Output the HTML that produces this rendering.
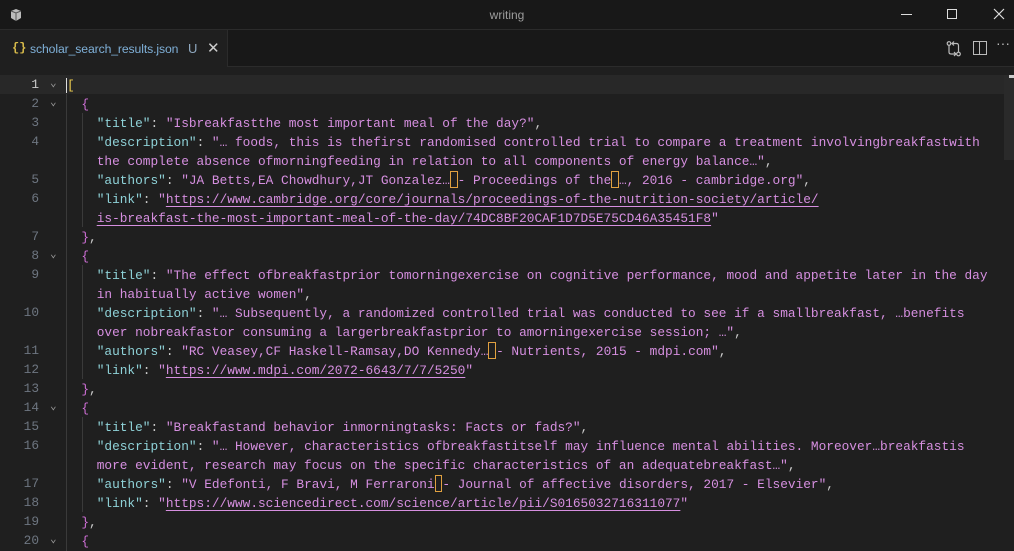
<!DOCTYPE html>
<html><head><meta charset="utf-8"><style>
*{margin:0;padding:0;box-sizing:border-box}
body{width:1014px;height:551px;overflow:hidden;background:#1f1f1f;font-family:"Liberation Sans",sans-serif;position:relative}
#title{position:absolute;left:0;top:0;width:1014px;height:30px;background:#181818;border-bottom:1px solid #2b2b2b}
#title .t{position:absolute;left:0;width:1014px;top:8px;text-align:center;color:#9d9d9d;font-size:12px}
#tabs{position:absolute;top:30px;left:0;width:1014px;height:37px;background:#181818;border-bottom:1px solid #2b2b2b}
#tab{position:absolute;left:0;top:0;width:228px;height:37px;background:#1f1f1f;border-right:1px solid #2b2b2b}
#tab .n{position:absolute;left:30px;top:12px;color:#7fb0d8;font-size:12.2px;letter-spacing:-0.1px}
#tab .b{position:absolute;left:12px;top:11px;color:#d7ba4a;font-size:12px;font-weight:bold;font-family:"Liberation Mono",monospace}
#tab .u{position:absolute;left:188px;top:11px;color:#8fa8bf;font-size:13px}
#tab .x{position:absolute;left:207px;top:9px;color:#ccc;font-size:15px}
.row{position:absolute;left:0;height:19px;width:1014px;font-family:"Liberation Mono",monospace;font-size:12.8px;line-height:19px;white-space:pre}
.ln{position:absolute;right:975px;color:#6e7681;text-align:right}
.cv{position:absolute;left:50px;color:#9a9a9a;font-size:11px}
.c{position:absolute;left:66px;color:#ccc;top:1px}
.k{color:#8fd2d8}.s{color:#d68fe0}.p{color:#cccccc}.br{color:#d070d8}.y{color:#f0d050}
.a{text-decoration:underline;text-underline-offset:3px}
.box{display:inline-block;width:7.7px;height:17px;border:1px solid #e0a040;vertical-align:-4px}
</style></head><body>
<div id="title">
<svg style="position:absolute;left:9px;top:8px" width="14" height="14" viewBox="0 0 14 14"><path d="M2 3 L7 1 L12 3 L12 10 L7 13 L2 10Z" fill="#bbb"/><path d="M2 3 L7 5 L12 3 M7 5 L7 13" stroke="#555" fill="none"/></svg>
<div class="t">writing</div>
<div style="position:absolute;left:901px;top:14px;width:11px;height:1px;background:#ddd"></div>
<div style="position:absolute;left:947px;top:9px;width:10px;height:10px;border:1px solid #ddd"></div>
<svg style="position:absolute;left:993px;top:8px" width="12" height="12"><path d="M1 1L11 11M11 1L1 11" stroke="#ddd" stroke-width="1.2"/></svg>
</div>
<div id="tabs">
<div id="tab"><span class="b">{}</span><span class="n">scholar_search_results.json</span><span class="u">U</span><span class="x">✕</span></div>
<svg style="position:absolute;left:946px;top:11px" width="16" height="16" viewBox="0 0 16 16" fill="none" stroke="#bbb" stroke-width="1.2"><circle cx="3" cy="2.5" r="1.8"/><circle cx="12.5" cy="13" r="1.8"/><path d="M3 4.5V11q0 2 2 2H10M12.5 11V4.5q0-2-2-2H6M8 0.5L6 2.5L8 4.5M8 11L10 13L8 15"/></svg>
<div style="position:absolute;left:973px;top:11px;width:14px;height:14px;border:1.2px solid #bbb"><div style="position:absolute;left:5px;top:0;width:1.2px;height:12px;background:#bbb"></div></div>
<div style="position:absolute;left:996px;top:5px;color:#bbb;font-size:14px">···</div>
</div>
<div style="position:absolute;left:0;top:75px;width:1014px;height:19px;background:#282828"></div>
<div style="position:absolute;left:66px;top:94px;width:1px;height:457px;background:#3a3a3a"></div>
<div style="position:absolute;left:82px;top:113px;width:1px;height:114px;background:#3a3a3a"></div>
<div style="position:absolute;left:82px;top:265px;width:1px;height:114px;background:#3a3a3a"></div>
<div style="position:absolute;left:82px;top:417px;width:1px;height:95px;background:#3a3a3a"></div>
<div style="position:absolute;left:1004px;top:75px;width:10px;height:85px;background:#2a2a2a"></div>
<div style="position:absolute;left:1009px;top:75px;width:5px;height:3px;background:#ccc"></div>

<div class="row" style="top:75px"><span class="ln" style="color:#ccc">1</span><span class="cv">⌄</span><span class="c"><span class="y" style="border-left:1px solid #ddd">[</span></span></div>
<div class="row" style="top:94px"><span class="ln">2</span><span class="cv">⌄</span><span class="c">  <span class="br">{</span></span></div>
<div class="row" style="top:113px"><span class="ln">3</span><span class="c">    <span class="k">"title"</span><span class="p">: </span><span class="s">"Isbreakfastthe most important meal of the day?"</span><span class="p">,</span></span></div>
<div class="row" style="top:132px"><span class="ln">4</span><span class="c">    <span class="k">"description"</span><span class="p">: </span><span class="s">"… foods, this is thefirst randomised controlled trial to compare a treatment involvingbreakfastwith</span></span></div>
<div class="row" style="top:151px"><span class="c">    <span class="s">the complete absence ofmorningfeeding in relation to all components of energy balance…"</span><span class="p">,</span></span></div>
<div class="row" style="top:170px"><span class="ln">5</span><span class="c">    <span class="k">"authors"</span><span class="p">: </span><span class="s">"JA Betts,EA Chowdhury,JT Gonzalez…<span class="box"></span>- Proceedings of the<span class="box"></span>…, 2016 - cambridge.org"</span><span class="p">,</span></span></div>
<div class="row" style="top:189px"><span class="ln">6</span><span class="c">    <span class="k">"link"</span><span class="p">: </span><span class="s">"<span class="a">https://www.cambridge.org/core/journals/proceedings-of-the-nutrition-society/article/</span></span></span></div>
<div class="row" style="top:208px"><span class="c">    <span class="s"><span class="a">is-breakfast-the-most-important-meal-of-the-day/74DC8BF20CAF1D7D5E75CD46A35451F8</span>"</span></span></div>
<div class="row" style="top:227px"><span class="ln">7</span><span class="c">  <span class="br">}</span><span class="p">,</span></span></div>
<div class="row" style="top:246px"><span class="ln">8</span><span class="cv">⌄</span><span class="c">  <span class="br">{</span></span></div>
<div class="row" style="top:265px"><span class="ln">9</span><span class="c">    <span class="k">"title"</span><span class="p">: </span><span class="s">"The effect ofbreakfastprior tomorningexercise on cognitive performance, mood and appetite later in the day</span></span></div>
<div class="row" style="top:284px"><span class="c">    <span class="s">in habitually active women"</span><span class="p">,</span></span></div>
<div class="row" style="top:303px"><span class="ln">10</span><span class="c">    <span class="k">"description"</span><span class="p">: </span><span class="s">"… Subsequently, a randomized controlled trial was conducted to see if a smallbreakfast, …benefits</span></span></div>
<div class="row" style="top:322px"><span class="c">    <span class="s">over nobreakfastor consuming a largerbreakfastprior to amorningexercise session; …"</span><span class="p">,</span></span></div>
<div class="row" style="top:341px"><span class="ln">11</span><span class="c">    <span class="k">"authors"</span><span class="p">: </span><span class="s">"RC Veasey,CF Haskell-Ramsay,DO Kennedy…<span class="box"></span>- Nutrients, 2015 - mdpi.com"</span><span class="p">,</span></span></div>
<div class="row" style="top:360px"><span class="ln">12</span><span class="c">    <span class="k">"link"</span><span class="p">: </span><span class="s">"<span class="a">https://www.mdpi.com/2072-6643/7/7/5250</span>"</span></span></div>
<div class="row" style="top:379px"><span class="ln">13</span><span class="c">  <span class="br">}</span><span class="p">,</span></span></div>
<div class="row" style="top:398px"><span class="ln">14</span><span class="cv">⌄</span><span class="c">  <span class="br">{</span></span></div>
<div class="row" style="top:417px"><span class="ln">15</span><span class="c">    <span class="k">"title"</span><span class="p">: </span><span class="s">"Breakfastand behavior inmorningtasks: Facts or fads?"</span><span class="p">,</span></span></div>
<div class="row" style="top:436px"><span class="ln">16</span><span class="c">    <span class="k">"description"</span><span class="p">: </span><span class="s">"… However, characteristics ofbreakfastitself may influence mental abilities. Moreover…breakfastis</span></span></div>
<div class="row" style="top:455px"><span class="c">    <span class="s">more evident, research may focus on the specific characteristics of an adequatebreakfast…"</span><span class="p">,</span></span></div>
<div class="row" style="top:474px"><span class="ln">17</span><span class="c">    <span class="k">"authors"</span><span class="p">: </span><span class="s">"V Edefonti, F Bravi, M Ferraroni<span class="box"></span>- Journal of affective disorders, 2017 - Elsevier"</span><span class="p">,</span></span></div>
<div class="row" style="top:493px"><span class="ln">18</span><span class="c">    <span class="k">"link"</span><span class="p">: </span><span class="s">"<span class="a">https://www.sciencedirect.com/science/article/pii/S0165032716311077</span>"</span></span></div>
<div class="row" style="top:512px"><span class="ln">19</span><span class="c">  <span class="br">}</span><span class="p">,</span></span></div>
<div class="row" style="top:531px"><span class="ln">20</span><span class="cv">⌄</span><span class="c">  <span class="br">{</span></span></div>
</body></html>
